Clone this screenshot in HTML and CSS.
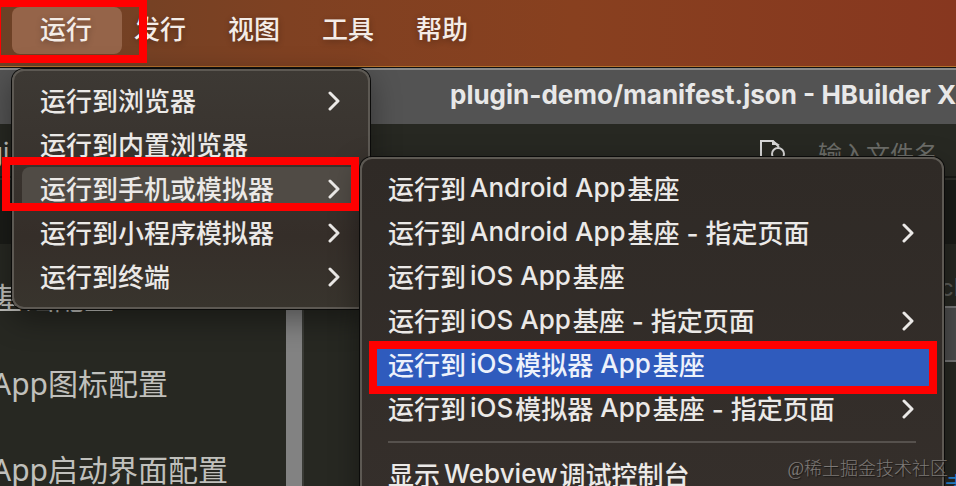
FILE: index.html
```
<!DOCTYPE html>
<html lang="zh-CN">
<head>
<meta charset="UTF-8">
<meta name="viewport" content="width=device-width, initial-scale=1.0">
<title>plugin-demo/manifest.json - HBuilder X</title>
<link rel="stylesheet" href="styles.css">
</head>
<body>

<!-- System menu bar -->
<nav class="menubar">
    <button type="button" class="menubar-item active">运行</button>
    <button type="button" class="menubar-item">发行</button>
    <button type="button" class="menubar-item">视图</button>
    <button type="button" class="menubar-item">工具</button>
    <button type="button" class="menubar-item">帮助</button>
</nav>

<!-- Editor window -->
<main class="window">
    <h1 class="titlebar">plugin-demo/manifest.json - HBuilder X</h1>
    <div class="toolbar">
        <span class="crumb">gi</span>
        <label class="file-search">
            <svg width="28" height="32" viewBox="0 0 28 32" fill="none" stroke="#d8d8d8" stroke-width="2">
                <path d="M8 25H2V2h12l6 6"/>
                <path d="M13 1v5h8z" fill="#d8d8d8" stroke="none"/>
                <circle cx="19" cy="15" r="6"/>
                <path d="M23 20l4 5"/>
            </svg>
            <input type="text" placeholder="输入文件名">
        </label>
    </div>
    <div class="tabs"></div>
    <div class="workspace">
        <ul class="sidebar">
            <li><a href="#base">基础配置</a></li>
            <li><a href="#icon">App图标配置</a></li>
            <li><a href="#splash">App启动界面配置</a></li>
        </ul>
        <div class="scrollbar"></div>
        <div class="content">
            <span class="content-label">ch</span>
            <div class="content-field"></div>
            <a class="content-link" href="#help">者</a>
        </div>
    </div>
</main>

<!-- Run menu -->
<div class="menu run-menu">
    <button type="button" class="menu-item">运行到浏览器<svg class="arrow" viewBox="0 0 12 20"><path d="M2 2l8 8-8 8"/></svg></button>
    <button type="button" class="menu-item">运行到内置浏览器</button>
    <button type="button" class="menu-item open">运行到手机或模拟器<svg class="arrow" viewBox="0 0 12 20"><path d="M2 2l8 8-8 8"/></svg></button>
    <button type="button" class="menu-item">运行到小程序模拟器<svg class="arrow" viewBox="0 0 12 20"><path d="M2 2l8 8-8 8"/></svg></button>
    <button type="button" class="menu-item">运行到终端<svg class="arrow" viewBox="0 0 12 20"><path d="M2 2l8 8-8 8"/></svg></button>
</div>

<!-- Phone / simulator submenu -->
<div class="menu device-menu">
    <button type="button" class="menu-item">运行到<span class="latin">Android App</span>基座</button>
    <button type="button" class="menu-item">运行到<span class="latin">Android App</span>基座 - 指定页面<svg class="arrow" viewBox="0 0 12 20"><path d="M2 2l8 8-8 8"/></svg></button>
    <button type="button" class="menu-item">运行到<span class="latin">iOS App</span>基座</button>
    <button type="button" class="menu-item">运行到<span class="latin">iOS App</span>基座 - 指定页面<svg class="arrow" viewBox="0 0 12 20"><path d="M2 2l8 8-8 8"/></svg></button>
    <button type="button" class="menu-item selected">运行到<span class="latin">iOS</span>模拟器 <span class="latin-end">App</span>基座</button>
    <button type="button" class="menu-item">运行到<span class="latin">iOS</span>模拟器 <span class="latin-end">App</span>基座 - 指定页面<svg class="arrow" viewBox="0 0 12 20"><path d="M2 2l8 8-8 8"/></svg></button>
    <hr>
    <button type="button" class="menu-item">显示<span class="latin">Webview</span>调试控制台</button>
</div>

<!-- Step highlights -->
<div class="mark mark-run"></div>
<div class="mark mark-device"></div>
<div class="mark mark-ios"></div>

<div class="watermark">@稀土掘金技术社区</div>

</body>
</html>
```
FILE: styles.css
```
* {
    box-sizing: border-box;
}
body {
    margin: 0;
    height: 100vh;
    display: flex;
    flex-direction: column;
    position: relative;
    overflow: hidden;
    background-color: #272822;
    font-family: Inter, "Noto Sans CJK SC", sans-serif;
    font-size: 26px;
    white-space: nowrap;
}
button {
    border: 0;
    padding: 0;
    background: none;
    color: inherit;
    font: inherit;
}
a {
    color: inherit;
    text-decoration: none;
}

/* Menu bar */
.menubar {
    display: flex;
    flex: none;
    height: 67px;
    padding: 7px 12px 12px;
    background: linear-gradient(to right, #6c4126, #7f4122 30%, #88401f 60%, #87371f);
    border-bottom: 1px solid #b5712c;
    color: #f4ece7;
    font-weight: 500;
}
.menubar-item {
    width: 110px;
    margin-right: -16px;
    padding: 0 2px 6px 0;
    border-radius: 8px;
    text-shadow: 0 2px 6px rgba(0, 0, 0, 0.3);
}
.menubar-item.active {
    background-color: #956449;
}

/* Editor window */
.window {
    flex: 1;
    min-height: 0;
    display: flex;
    flex-direction: column;
    border-top: 1px solid #111;
}
.titlebar {
    flex: none;
    height: 56px;
    margin: 0;
    padding-left: 450px;
    border-top: 2px solid #8a8a8a;
    background-color: #535353;
    color: #e8e8e8;
    font-size: 26px;
    font-weight: 750;
    line-height: 50px;
}
.toolbar {
    flex: none;
    display: flex;
    justify-content: space-between;
    height: 54px;
    padding: 8px 18px 0 0;
    border-bottom: 2px solid #181915;
    color: #c8c8c4;
}
.crumb {
    margin-left: -13px;
    line-height: 42px;
}
.file-search {
    display: flex;
    gap: 31px;
    padding-top: 7px;
}
.file-search input {
    width: 120px;
    height: 26px;
    padding: 0;
    border: 0;
    background: none;
    font: 24px "Noto Sans CJK SC", sans-serif;
}
.file-search input::placeholder {
    color: #6c6d69;
}
.tabs {
    flex: none;
    height: 66px;
    border-top: 2px solid #2c2d28;
    background-color: #1b1c18;
}
.workspace {
    flex: 1;
    min-height: 0;
    display: flex;
}
.sidebar {
    width: 286px;
    margin: 0;
    padding: 11px 0 0;
    list-style: none;
    color: #c0c0bc;
    font: 30px "Noto Sans", "Noto Sans CJK SC", sans-serif;
    line-height: 86px;
}
.sidebar li {
    height: 86px;
    margin-left: -8px;
}
.sidebar li:first-child {
    margin-left: -6px;
}
.scrollbar {
    width: 16px;
    background-color: #828282;
}
.content {
    flex: 1;
    display: flex;
    flex-direction: column;
    align-items: flex-end;
    border-left: 2px solid #3a3b36;
}
.content-label {
    flex: none;
    height: 62px;
    margin-right: -12px;
    color: #5c5d59;
    font-size: 24px;
    line-height: 88px;
}
.content-field {
    flex: none;
    width: 60%;
    height: 56px;
    border-top: 2px solid #777;
    border-bottom: 2px solid #777;
    background-color: #4d4d4d;
}
.content-link {
    margin: 104px -15px 0 0;
    color: #2487d8;
}

/* Drop-down menus */
.menu {
    position: absolute;
    padding: 8px;
    border: 2px solid #5d5953;
    border-radius: 12px;
    background: linear-gradient(#3d3934, #352e29 70%, #38342d);
    box-shadow: 0 0 0 1px #0b0b0a, 0 10px 30px rgba(0, 0, 0, 0.4);
    color: #ebe9e7;
    font-weight: 500;
}
.run-menu {
    top: 69px;
    left: 12px;
    width: 358px;
}
.device-menu {
    top: 157px;
    left: 360px;
    width: 584px;
    background: linear-gradient(#2f2a26, #352f2b);
}
.menu-item {
    display: flex;
    align-items: center;
    width: 100%;
    height: 44px;
    padding: 0 20px 4px 18px;
    border-radius: 8px;
    white-space: pre;
}
.menu-item.open {
    background-color: #504b45;
}
.menu-item.selected {
    background-color: #2f5bbd;
    color: #edf1fb;
}
.latin {
    margin: 0 2px 0 4px;
}
.latin-end {
    margin-right: 2px;
}
.arrow {
    width: 12px;
    height: 20px;
    margin: 4px 0 0 auto;
    fill: none;
    stroke: currentColor;
    stroke-width: 3;
    stroke-linecap: round;
    stroke-linejoin: round;
}
.menu hr {
    height: 2px;
    margin: 10px 18px;
    border: 0;
    background-color: #56514d;
}

/* Red frames around each step */
.mark {
    position: absolute;
    border: 8px solid #f00;
    pointer-events: none;
}
.mark-run {
    top: -1px;
    left: -7px;
    width: 154px;
    height: 64px;
}
.mark-device {
    top: 157px;
    left: 2px;
    width: 357px;
    height: 54px;
}
.mark-ios {
    top: 341px;
    left: 369px;
    width: 568px;
    height: 53px;
}
.watermark {
    position: absolute;
    right: 8px;
    bottom: 6px;
    color: #7d7976;
    font: 300 18px "Liberation Serif", "Noto Sans CJK SC", serif;
    text-shadow: 1px 1px 1px #1a1816;
}
```
